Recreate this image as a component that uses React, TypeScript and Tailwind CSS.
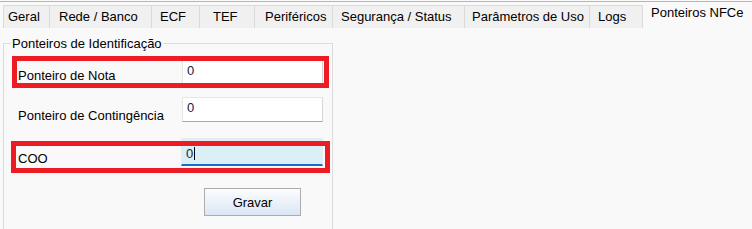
const tabs = [
  { label: "Geral", cls: "w-[47px] pl-[4px] border-l" },
  { label: "Rede / Banco", cls: "w-[102px] pl-[9px]" },
  { label: "ECF", cls: "w-[48px] pl-[8px]" },
  { label: "TEF", cls: "w-[55px] pl-[13px]" },
  { label: "Periféricos", cls: "w-[78px] pl-[10px]" },
  { label: "Segurança / Status", cls: "w-[132px] pl-[8px]" },
  { label: "Parâmetros de Uso", cls: "w-[125px] pl-[7px]" },
  { label: "Logs", cls: "w-[53px] pl-[8px]" },
];

const App = () => {
  return (
    <div className="w-[752px] h-[229px] overflow-hidden bg-[#f9f9f9] text-[13px] leading-[15px] text-black font-['Liberation_Sans',Arial,sans-serif]">
      {/* tab strip */}
      <div className="h-px bg-[#f9f9f9]" />
      <div className="h-px bg-[#a7b8cf]" />
      <div className="flex h-[26px] items-end pl-[3px]">
        {tabs.map((t) => (
          <div
            key={t.label}
            className={`h-[23px] shrink-0 whitespace-nowrap border-t border-r border-[#dadada] bg-[#f0f0f0] pt-[3px] ${t.cls}`}
          >
            {t.label}
          </div>
        ))}
        <div className="h-[26px] flex-1 whitespace-nowrap pt-[3px] pl-[8px]">
          Ponteiros NFCe
        </div>
      </div>

      {/* content */}
      <div className="pt-[8px] pl-[3px]">
        <fieldset className="w-[330px] h-[220px] border border-[#dcdcdc]">
          <legend className="ml-[7px] px-px leading-[15px]">
            Ponteiros de Identificação
          </legend>

          <div className="relative mt-[9px] flex h-[24px]">
            <div className="ml-[14px] w-[164px] pt-[8px]">Ponteiro de Nota</div>
            <div className="h-[24px] w-[141px] border border-[#e6e6e6] border-b-[#a9a9a9] border-r-[#d6d6d6] bg-white pl-[4px] pt-[2px] text-[#1c1c3a]">
              0
            </div>
            <div className="absolute left-[8px] top-[-4px] h-[32px] w-[317px] border-[5px] border-[#ed1c24]" />
          </div>

          <div className="mt-[13px] flex h-[25px]">
            <div className="ml-[14px] w-[164px] pt-[11px]">Ponteiro de Contingência</div>
            <div className="h-[25px] w-[141px] border border-[#e6e6e6] border-b-[#a9a9a9] border-r-[#d6d6d6] bg-white pl-[4px] pt-[2px] text-[#1c1c3a]">
              0
            </div>
          </div>

          <div className="relative mt-[16px] flex h-[28px]">
            <div className="ml-[14px] w-[163px] pt-[13px]">COO</div>
            <div className="flex h-[28px] w-[142px] items-start border border-[#e4ecf0] border-b-2 border-b-[#1a6dc2] bg-[#daf0f6] pl-[4px] pt-[7px] text-[#1c1c3a]">
              <span>0</span>
              <span className="ml-px mt-[1px] h-[13px] w-px bg-black" />
            </div>
            <div className="absolute left-[7px] top-[3px] h-[32px] w-[319px] border-[5px] border-[#ed1c24]" />
          </div>

          <div className="ml-[200px] mt-[22px] flex h-[28px] w-[97px] items-center justify-center border border-[#acacac] bg-gradient-to-b from-[#fcfdff] to-[#dbe6f4]">
            Gravar
          </div>
        </fieldset>
      </div>
    </div>
  );
};

export default App;
